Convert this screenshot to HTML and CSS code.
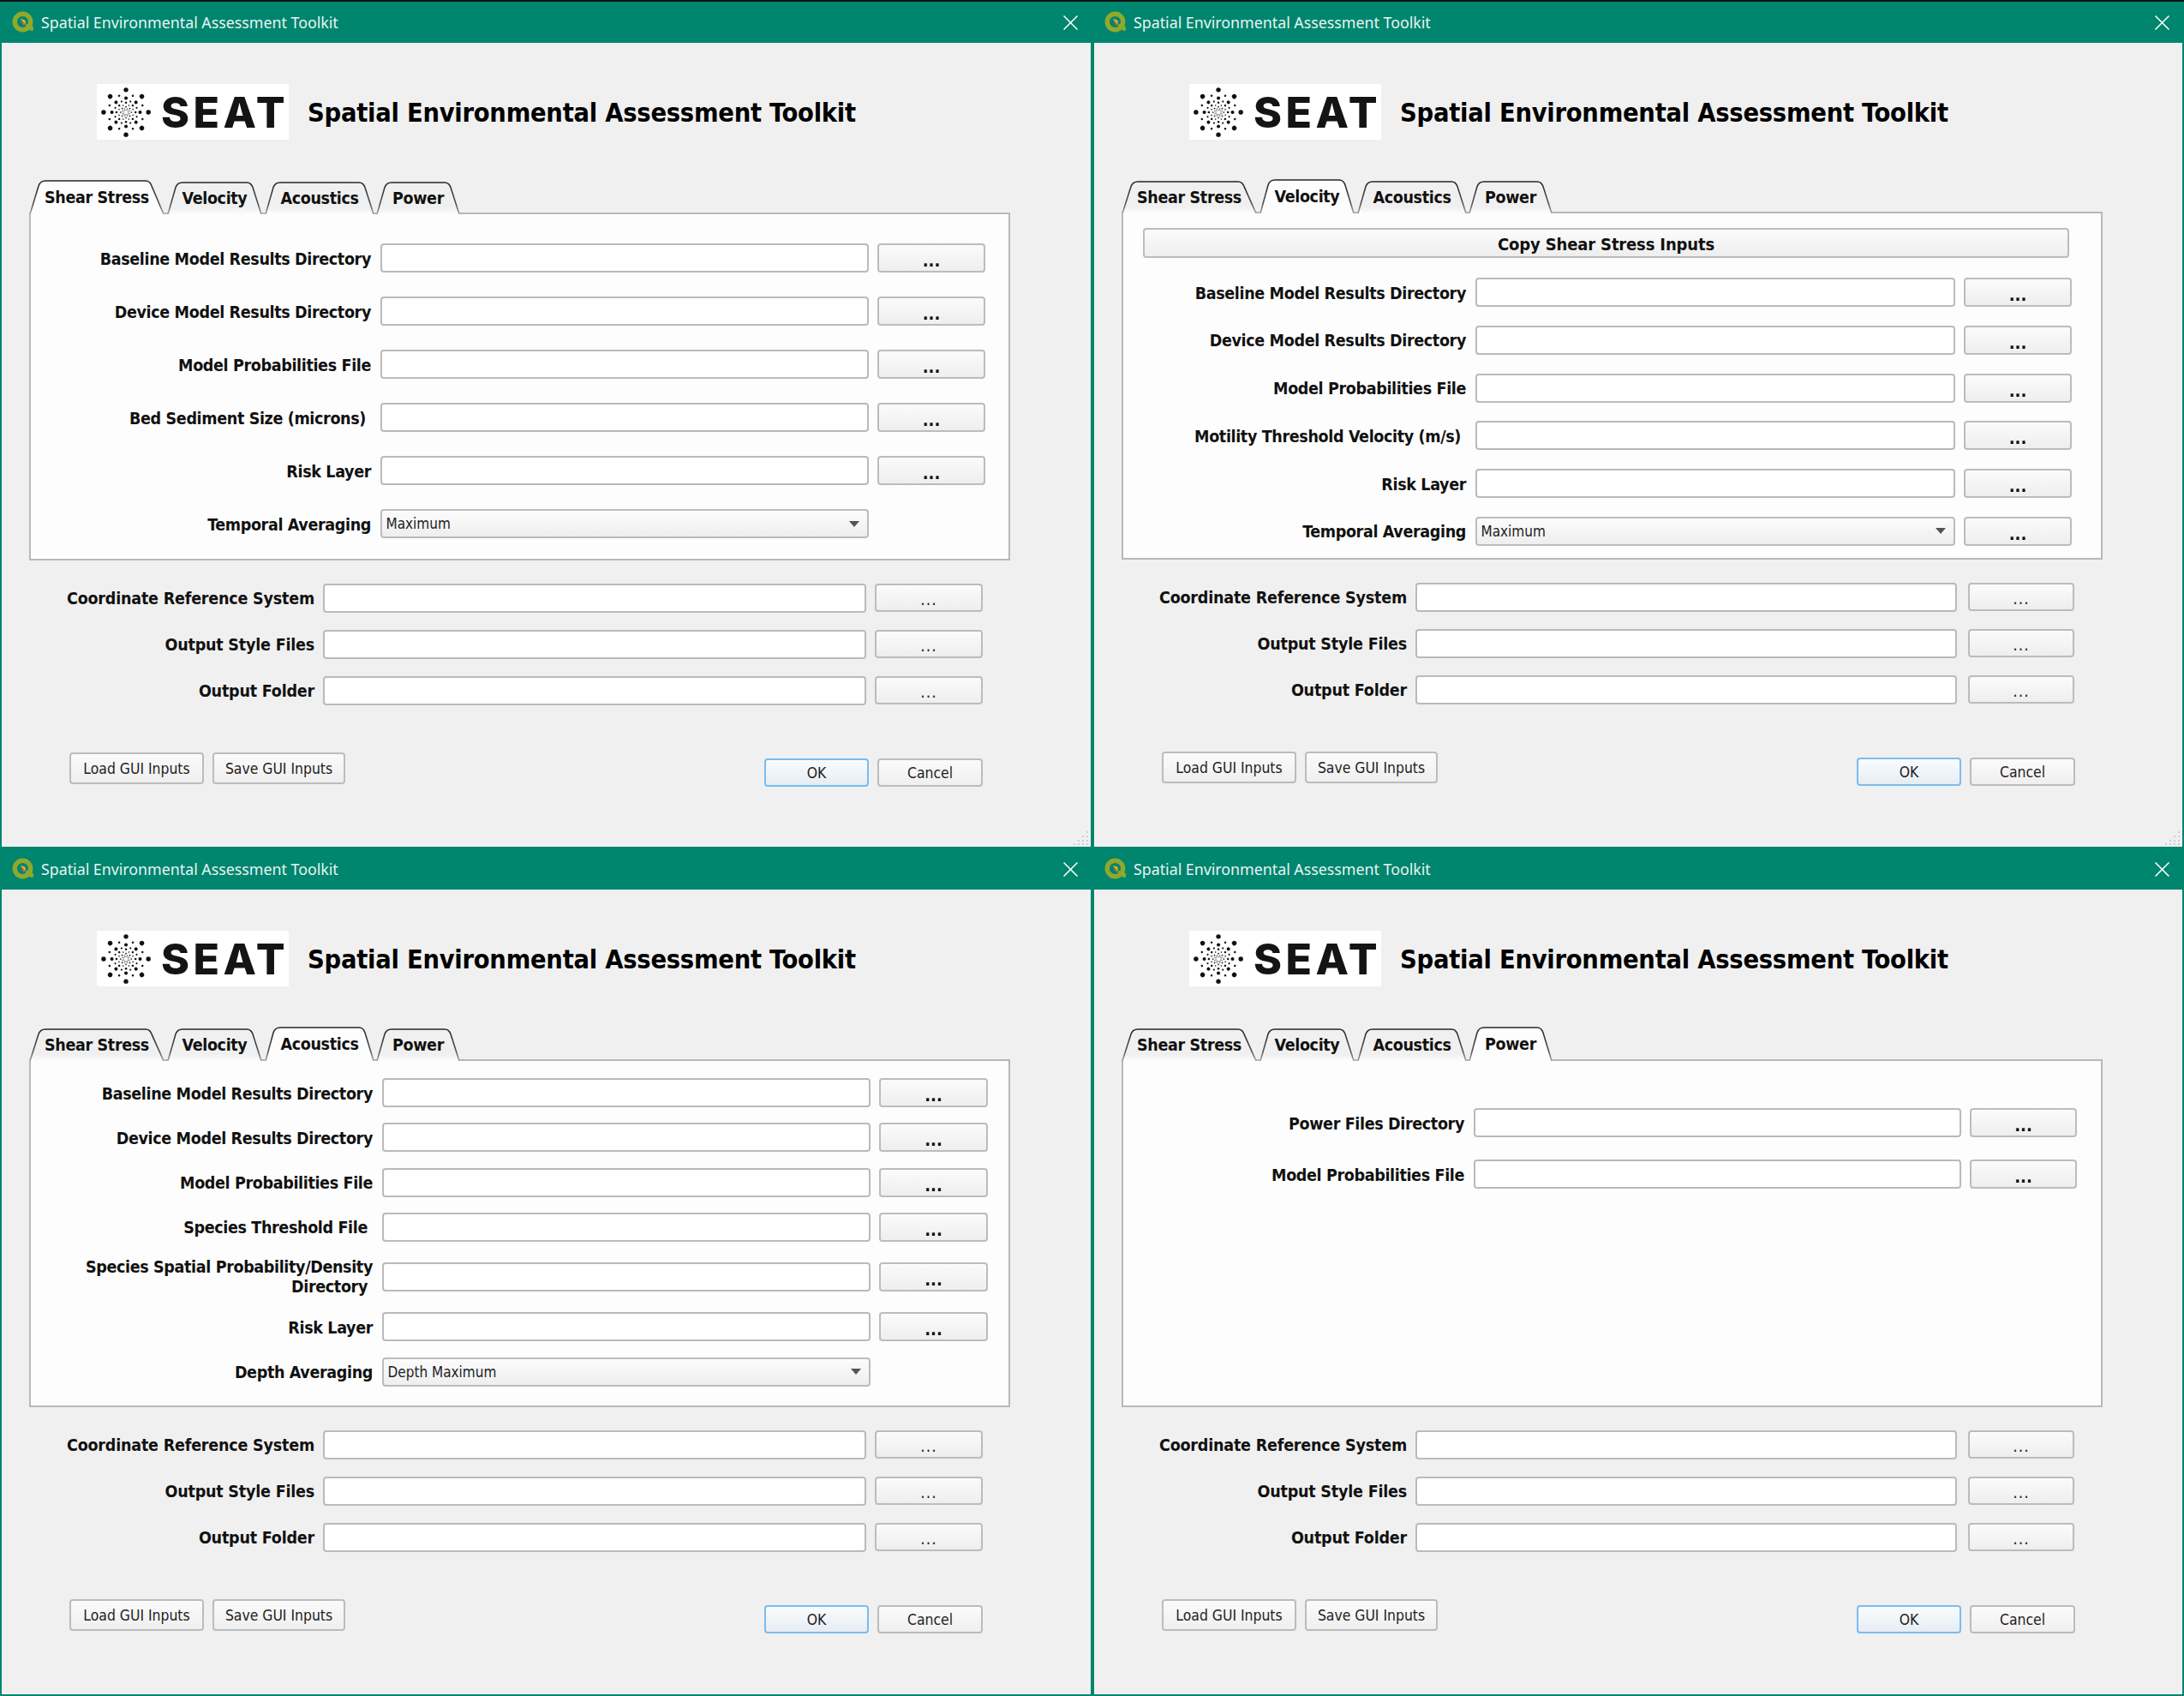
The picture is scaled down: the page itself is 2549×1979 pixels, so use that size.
FILE: index.html
```html
<!DOCTYPE html>
<html lang="en">
<head>
    <meta charset="UTF-8">
    <title>Spatial Environmental Assessment Toolkit</title>
    <link rel="stylesheet" href="styles.css">
</head>
<body>
<!-- shared drawings -->
<svg class="svg-defs" aria-hidden="true">
    <defs>
        <linearGradient id="tab-line" x1="0" y1="0" x2="0" y2="1">
            <stop offset="0" stop-color="#262626"/>
            <stop offset="0.7" stop-color="#555"/>
            <stop offset="1" stop-color="#aaa"/>
        </linearGradient>
        <linearGradient id="tab-idle" x1="0" y1="0" x2="0" y2="1">
            <stop offset="0" stop-color="#f0f0f0"/>
            <stop offset="0.8" stop-color="#f0f0f0"/>
            <stop offset="1" stop-color="#fdfdfd"/>
        </linearGradient>
        <symbol id="tab-shear" viewBox="0 0 158 41" preserveAspectRatio="none">
            <path d="M1 41 L11 8 Q13 2 19 2 L136 2 Q141 2 143 8 L157 41" stroke="url(#tab-line)" stroke-width="1.6"/>
        </symbol>
        <symbol id="tab-velocity" viewBox="0 0 111 41" preserveAspectRatio="none">
            <path d="M1 41 L10 8 Q12 2 18 2 L93 2 Q98 2 100 8 L110 41" stroke="url(#tab-line)" stroke-width="1.6"/>
        </symbol>
        <symbol id="tab-acoustics" viewBox="0 0 128 41" preserveAspectRatio="none">
            <path d="M1 41 L10 8 Q12 2 18 2 L110 2 Q115 2 117 8 L127 41" stroke="url(#tab-line)" stroke-width="1.6"/>
        </symbol>
        <symbol id="tab-power" viewBox="0 0 98 41" preserveAspectRatio="none">
            <path d="M1 41 L10 8 Q12 2 18 2 L80 2 Q85 2 87 8 L97 41" stroke="url(#tab-line)" stroke-width="1.6"/>
        </symbol>
        <symbol id="qgis" viewBox="0 0 24 24">
            <circle cx="11.5" cy="11.5" r="8.5" fill="none" stroke="#8fa92c" stroke-width="5"/>
            <path d="M14 15 L20 21 L23 21 L23 17 L18 13 Z" fill="#8fa92c"/>
            <path d="M9 8 L15 14 L12 15 Z" fill="#e0662a"/>
            <path d="M9 8 L14 10 L15 14 Z" fill="#f0c23a"/>
        </symbol>
        <g id="spoke">
            <circle cx="27" r="2.8"/>
            <circle cx="17" r="2.1"/>
            <circle cx="11.5" r="1.3"/>
            <circle cx="6.5" r="0.9"/>
            <circle cx="3" r="0.6"/>
            <g transform="rotate(22.5)">
                <circle cx="21.5" r="1.3"/>
                <circle cx="14" r="1.1"/>
                <circle cx="9" r="0.8"/>
                <circle cx="4.5" r="0.6"/>
            </g>
        </g>
        <symbol id="burst" viewBox="-30 -30 60 60">
            <g fill="#111">
                <use href="#spoke"/>
                <use href="#spoke" transform="rotate(45)"/>
                <use href="#spoke" transform="rotate(90)"/>
                <use href="#spoke" transform="rotate(135)"/>
                <use href="#spoke" transform="rotate(180)"/>
                <use href="#spoke" transform="rotate(225)"/>
                <use href="#spoke" transform="rotate(270)"/>
                <use href="#spoke" transform="rotate(315)"/>
            </g>
        </symbol>
        <symbol id="grip" viewBox="0 0 18 18">
            <g fill="#c4c4c4">
                <circle cx="16" cy="2" r="1"/>
                <circle cx="11" cy="7" r="1"/><circle cx="16" cy="7" r="1"/>
                <circle cx="6" cy="12" r="1"/><circle cx="11" cy="12" r="1"/><circle cx="16" cy="12" r="1"/>
                <circle cx="1" cy="16" r="1"/><circle cx="6" cy="16" r="1"/><circle cx="11" cy="16" r="1"/><circle cx="16" cy="16" r="1"/>
            </g>
        </symbol>
    </defs>
</svg>

<div class="desk">

    <!-- Shear Stress -->
    <section class="window win-shear">
        <header class="titlebar">
            <svg class="app-icon"><use href="#qgis"/></svg>
            <span class="title-text">Spatial Environmental Assessment Toolkit</span>
            <svg class="close-icon" viewBox="0 0 17 17"><path d="M0.5 0.5 L16.5 16.5 M16.5 0.5 L0.5 16.5"/></svg>
        </header>
        <div class="brand">
            <div class="logo"><svg class="burst"><use href="#burst"/></svg><span class="logo-text">SEAT</span></div>
            <h1>Spatial Environmental Assessment Toolkit</h1>
        </div>
        <div class="tabs">
            <div class="tab tab-w-shear active"><svg class="tab-shape" fill="#fdfdfd"><use href="#tab-shear"/></svg><span>Shear Stress</span></div>
            <div class="tab tab-w-velocity"><svg class="tab-shape" fill="url(#tab-idle)"><use href="#tab-velocity"/></svg><span>Velocity</span></div>
            <div class="tab tab-w-acoustics"><svg class="tab-shape" fill="url(#tab-idle)"><use href="#tab-acoustics"/></svg><span>Acoustics</span></div>
            <div class="tab tab-w-power"><svg class="tab-shape" fill="url(#tab-idle)"><use href="#tab-power"/></svg><span>Power</span></div>
        </div>
        <div class="panel">
            <div class="fields">
                <label>Baseline Model Results Directory</label><input type="text"><button class="browse">...</button>
                <label>Device Model Results Directory</label><input type="text"><button class="browse">...</button>
                <label>Model Probabilities File</label><input type="text"><button class="browse">...</button>
                <label class="inset">Bed Sediment Size (microns)</label><input type="text"><button class="browse">...</button>
                <label>Risk Layer</label><input type="text"><button class="browse">...</button>
                <label>Temporal Averaging</label><div class="combo">Maximum<i class="combo-arrow"></i></div>
            </div>
        </div>
        <div class="globals">
            <label>Coordinate Reference System</label><input type="text"><button class="browse plain">...</button>
            <label>Output Style Files</label><input type="text"><button class="browse plain">...</button>
            <label>Output Folder</label><input type="text"><button class="browse plain">...</button>
        </div>
        <footer class="actions">
            <button class="action load">Load GUI Inputs</button>
            <button class="action save">Save GUI Inputs</button>
            <button class="action ok">OK</button>
            <button class="action cancel">Cancel</button>
        </footer>
        <svg class="grip"><use href="#grip"/></svg>
    </section>

    <!-- Velocity -->
    <section class="window win-right win-velocity">
        <header class="titlebar">
            <svg class="app-icon"><use href="#qgis"/></svg>
            <span class="title-text">Spatial Environmental Assessment Toolkit</span>
            <svg class="close-icon" viewBox="0 0 17 17"><path d="M0.5 0.5 L16.5 16.5 M16.5 0.5 L0.5 16.5"/></svg>
        </header>
        <div class="brand">
            <div class="logo"><svg class="burst"><use href="#burst"/></svg><span class="logo-text">SEAT</span></div>
            <h1>Spatial Environmental Assessment Toolkit</h1>
        </div>
        <div class="tabs">
            <div class="tab tab-w-shear"><svg class="tab-shape" fill="url(#tab-idle)"><use href="#tab-shear"/></svg><span>Shear Stress</span></div>
            <div class="tab tab-w-velocity active"><svg class="tab-shape" fill="#fdfdfd"><use href="#tab-velocity"/></svg><span>Velocity</span></div>
            <div class="tab tab-w-acoustics"><svg class="tab-shape" fill="url(#tab-idle)"><use href="#tab-acoustics"/></svg><span>Acoustics</span></div>
            <div class="tab tab-w-power"><svg class="tab-shape" fill="url(#tab-idle)"><use href="#tab-power"/></svg><span>Power</span></div>
        </div>
        <div class="panel">
            <button class="copy-btn">Copy Shear Stress Inputs</button>
            <div class="fields">
                <label>Baseline Model Results Directory</label><input type="text"><button class="browse">...</button>
                <label>Device Model Results Directory</label><input type="text"><button class="browse">...</button>
                <label>Model Probabilities File</label><input type="text"><button class="browse">...</button>
                <label class="inset">Motility Threshold Velocity (m/s)</label><input type="text"><button class="browse">...</button>
                <label>Risk Layer</label><input type="text"><button class="browse">...</button>
                <label>Temporal Averaging</label><div class="combo">Maximum<i class="combo-arrow"></i></div><button class="browse">...</button>
            </div>
        </div>
        <div class="globals">
            <label>Coordinate Reference System</label><input type="text"><button class="browse plain">...</button>
            <label>Output Style Files</label><input type="text"><button class="browse plain">...</button>
            <label>Output Folder</label><input type="text"><button class="browse plain">...</button>
        </div>
        <footer class="actions">
            <button class="action load">Load GUI Inputs</button>
            <button class="action save">Save GUI Inputs</button>
            <button class="action ok">OK</button>
            <button class="action cancel">Cancel</button>
        </footer>
        <svg class="grip"><use href="#grip"/></svg>
    </section>

    <!-- Acoustics -->
    <section class="window win-acoustics">
        <header class="titlebar">
            <svg class="app-icon"><use href="#qgis"/></svg>
            <span class="title-text">Spatial Environmental Assessment Toolkit</span>
            <svg class="close-icon" viewBox="0 0 17 17"><path d="M0.5 0.5 L16.5 16.5 M16.5 0.5 L0.5 16.5"/></svg>
        </header>
        <div class="brand">
            <div class="logo"><svg class="burst"><use href="#burst"/></svg><span class="logo-text">SEAT</span></div>
            <h1>Spatial Environmental Assessment Toolkit</h1>
        </div>
        <div class="tabs">
            <div class="tab tab-w-shear"><svg class="tab-shape" fill="url(#tab-idle)"><use href="#tab-shear"/></svg><span>Shear Stress</span></div>
            <div class="tab tab-w-velocity"><svg class="tab-shape" fill="url(#tab-idle)"><use href="#tab-velocity"/></svg><span>Velocity</span></div>
            <div class="tab tab-w-acoustics active"><svg class="tab-shape" fill="#fdfdfd"><use href="#tab-acoustics"/></svg><span>Acoustics</span></div>
            <div class="tab tab-w-power"><svg class="tab-shape" fill="url(#tab-idle)"><use href="#tab-power"/></svg><span>Power</span></div>
        </div>
        <div class="panel">
            <div class="fields">
                <label>Baseline Model Results Directory</label><input type="text"><button class="browse">...</button>
                <label>Device Model Results Directory</label><input type="text"><button class="browse">...</button>
                <label>Model Probabilities File</label><input type="text"><button class="browse">...</button>
                <label class="inset">Species Threshold File</label><input type="text"><button class="browse">...</button>
                <label class="two-line">Species Spatial Probability/Density<br><span class="inset">Directory</span></label><input type="text"><button class="browse">...</button>
                <label>Risk Layer</label><input type="text"><button class="browse">...</button>
                <label>Depth Averaging</label><div class="combo">Depth Maximum<i class="combo-arrow"></i></div>
            </div>
        </div>
        <div class="globals">
            <label>Coordinate Reference System</label><input type="text"><button class="browse plain">...</button>
            <label>Output Style Files</label><input type="text"><button class="browse plain">...</button>
            <label>Output Folder</label><input type="text"><button class="browse plain">...</button>
        </div>
        <footer class="actions">
            <button class="action load">Load GUI Inputs</button>
            <button class="action save">Save GUI Inputs</button>
            <button class="action ok">OK</button>
            <button class="action cancel">Cancel</button>
        </footer>
    </section>

    <!-- Power -->
    <section class="window win-right win-power">
        <header class="titlebar">
            <svg class="app-icon"><use href="#qgis"/></svg>
            <span class="title-text">Spatial Environmental Assessment Toolkit</span>
            <svg class="close-icon" viewBox="0 0 17 17"><path d="M0.5 0.5 L16.5 16.5 M16.5 0.5 L0.5 16.5"/></svg>
        </header>
        <div class="brand">
            <div class="logo"><svg class="burst"><use href="#burst"/></svg><span class="logo-text">SEAT</span></div>
            <h1>Spatial Environmental Assessment Toolkit</h1>
        </div>
        <div class="tabs">
            <div class="tab tab-w-shear"><svg class="tab-shape" fill="url(#tab-idle)"><use href="#tab-shear"/></svg><span>Shear Stress</span></div>
            <div class="tab tab-w-velocity"><svg class="tab-shape" fill="url(#tab-idle)"><use href="#tab-velocity"/></svg><span>Velocity</span></div>
            <div class="tab tab-w-acoustics"><svg class="tab-shape" fill="url(#tab-idle)"><use href="#tab-acoustics"/></svg><span>Acoustics</span></div>
            <div class="tab tab-w-power active"><svg class="tab-shape" fill="#fdfdfd"><use href="#tab-power"/></svg><span>Power</span></div>
        </div>
        <div class="panel">
            <div class="fields">
                <label>Power Files Directory</label><input type="text"><button class="browse">...</button>
                <label>Model Probabilities File</label><input type="text"><button class="browse">...</button>
            </div>
        </div>
        <div class="globals">
            <label>Coordinate Reference System</label><input type="text"><button class="browse plain">...</button>
            <label>Output Style Files</label><input type="text"><button class="browse plain">...</button>
            <label>Output Folder</label><input type="text"><button class="browse plain">...</button>
        </div>
        <footer class="actions">
            <button class="action load">Load GUI Inputs</button>
            <button class="action save">Save GUI Inputs</button>
            <button class="action ok">OK</button>
            <button class="action cancel">Cancel</button>
        </footer>
    </section>

</div>
</body>
</html>
```

FILE: styles.css
```css
* {
    box-sizing: border-box;
    margin: 0;
    padding: 0;
}

body {
    width: 2549px;
    height: 1979px;
    overflow: hidden;
    background: #00856f;
    border-top: 2px solid #141414;
    font-family: "DejaVu Sans Condensed", "DejaVu Sans", sans-serif;
    font-stretch: condensed;
    color: #111;
}

.svg-defs {
    position: absolute;
    width: 0;
    height: 0;
}

.desk {
    display: grid;
    grid-template-columns: 1275px 1274px;
    grid-template-rows: 988px 989px;
}

/* Window frame */
.window {
    position: relative;
    display: flex;
    flex-direction: column;
    background: #f0f0f0;
    border: 2px solid #00856f;
    border-top: none;
}

.titlebar {
    display: flex;
    align-items: center;
    flex: none;
    height: 48px;
    margin: 0 -2px;
    padding-left: 14px;
    padding-right: 17px;
    background: #00856f;
    color: #e9f4f1;
}

.app-icon {
    width: 26px;
    height: 26px;
    margin-right: 8px;
}

.title-text {
    font-family: "Noto Sans", sans-serif;
    font-stretch: normal;
    font-size: 17.8px;
}

.close-icon {
    width: 17px;
    height: 17px;
    margin-left: auto;
    fill: none;
    stroke: #fff;
    stroke-width: 1.5;
}

/* Logo and heading */
.brand {
    display: flex;
    align-items: center;
    flex: none;
    height: 65px;
    margin: 48px 0 0 111px;
}

.logo {
    display: flex;
    align-items: center;
    width: 224px;
    height: 65px;
    padding-left: 5px;
    background: #fff;
}

.burst {
    width: 60px;
    height: 60px;
}

.logo-text {
    margin-left: 12px;
    font-family: Inter, sans-serif;
    font-stretch: normal;
    font-size: 50px;
    font-weight: 800;
    letter-spacing: 4.4px;
    line-height: 1;
    color: #141414;
}

h1 {
    margin-left: 22px;
    padding-top: 2px;
    font-size: 30.5px;
    font-weight: bold;
    letter-spacing: -0.25px;
    color: #000;
    white-space: nowrap;
}

/* Tabs */
.tabs {
    position: relative;
    z-index: 1;
    display: flex;
    align-items: flex-end;
    flex: none;
    height: 41px;
    margin: 46px 0 -2px 32px;
}

.tab {
    position: relative;
    display: flex;
    align-items: center;
    justify-content: center;
    height: 39px;
    margin-right: 3px;
    padding-top: 2px;
    font-size: 19.5px;
    font-weight: bold;
    letter-spacing: -0.35px;
}

.tab.active {
    height: 41px;
}

.tab-w-shear { width: 158px; }
.tab-w-velocity { width: 111px; }
.tab-w-acoustics { width: 128px; margin-right: 2px; }
.tab-w-power { width: 98px; }

.tab span {
    position: relative;
}

.tab-shape {
    position: absolute;
    inset: 0;
    width: 100%;
    height: 100%;
}

/* Tab page */
.panel {
    flex: none;
    width: 1145px;
    height: 406px;
    margin-left: 32px;
    background: #fdfdfd;
    border: 2px solid #b8b8b8;
}

.copy-btn {
    display: block;
    width: 1081px;
    height: 35px;
    margin: 17px 0 0 23px;
    padding-top: 2px;
    font-family: inherit;
    font-stretch: inherit;
    font-size: 20px;
    font-weight: bold;
    letter-spacing: -0.15px;
    color: #111;
    background: linear-gradient(#fbfbfb, #eeeeee);
    border: 2px solid #bcbcbc;
    border-radius: 4px;
}

.fields,
.globals {
    display: grid;
    align-items: center;
}

label {
    padding-top: 2px;
    text-align: right;
    font-size: 19.5px;
    font-weight: bold;
    letter-spacing: -0.35px;
    white-space: nowrap;
}

.globals label {
    padding-top: 0;
    letter-spacing: -0.2px;
}

.inset {
    padding-right: 6px;
}

label .inset {
    display: inline-block;
}

.two-line {
    line-height: 23px;
}

input {
    display: block;
    width: 100%;
    height: 34px;
    background: #fff;
    border: 2px solid #bababa;
    border-radius: 4px;
}

.browse {
    height: 34px;
    padding-top: 6px;
    font-family: inherit;
    font-stretch: inherit;
    font-size: 20px;
    font-weight: bold;
    color: #111;
    background: linear-gradient(#fbfbfb, #eeeeee);
    border: 2px solid #bcbcbc;
    border-radius: 4px;
}

.browse.plain {
    height: 33px;
    padding-top: 2px;
    align-self: start;
    font-weight: normal;
    font-size: 19px;
    letter-spacing: 1px;
    color: #222;
}

.combo {
    display: flex;
    align-items: center;
    justify-content: space-between;
    height: 34px;
    padding: 0 9px 0 5px;
    font-size: 17px;
    background: linear-gradient(#fcfcfc, #eeeeee);
    border: 2px solid #bcbcbc;
    border-radius: 4px;
    color: #222;
}

.combo-arrow {
    width: 0;
    height: 0;
    border-left: 6px solid transparent;
    border-right: 6px solid transparent;
    border-top: 7px solid #555;
}

/* Per tab grids */
.win-shear .fields {
    grid-template-columns: 397px 570px 126px;
    column-gap: 10.5px;
    row-gap: 28px;
    padding-top: 34px;
}

.win-velocity .fields {
    grid-template-columns: 400px 560px 126px;
    column-gap: 10.5px;
    row-gap: 21.8px;
    padding-top: 23px;
}

.win-acoustics .fields {
    grid-template-columns: 399px 570px 127px;
    column-gap: 10.5px;
    row-gap: 18.3px;
    padding-top: 20px;
}

.win-acoustics .two-line {
    height: 46px;
    padding-top: 0;
}

.win-power .fields {
    grid-template-columns: 398px 569px 125px;
    column-gap: 10.5px;
    row-gap: 26px;
    padding-top: 55px;
}

/* Fields below the tabs */
.globals {
    grid-template-columns: 335px 634px 126px;
    column-gap: 10px;
    row-gap: 20px;
    margin: 27px 0 0 30px;
}

.win-right .globals {
    grid-template-columns: 335px 632px 127px;
}

.win-right .globals .browse {
    margin-left: 3px;
}

.win-velocity .tabs {
    margin-top: 45px;
}

/* Bottom buttons */
.actions {
    display: flex;
    align-items: flex-start;
    margin: 55px 0 0 79px;
}

.action {
    font-family: inherit;
    font-stretch: inherit;
    font-size: 17.4px;
    color: #222;
    background: linear-gradient(#fbfbfb, #efefef);
    border: 2px solid #bcbcbc;
    border-radius: 4px;
}

.load {
    width: 157px;
    height: 37px;
}

.save {
    width: 155px;
    height: 37px;
    margin-left: 10px;
}

.ok {
    width: 122px;
    height: 33px;
    margin: 7px 0 0 489px;
    background: linear-gradient(#f9fcff, #e6edf3);
    border-color: #79bdf0;
}

.cancel {
    width: 123px;
    height: 33px;
    margin: 7px 0 0 10px;
}

.grip {
    position: absolute;
    right: 2px;
    bottom: 1px;
    width: 18px;
    height: 18px;
}
```
